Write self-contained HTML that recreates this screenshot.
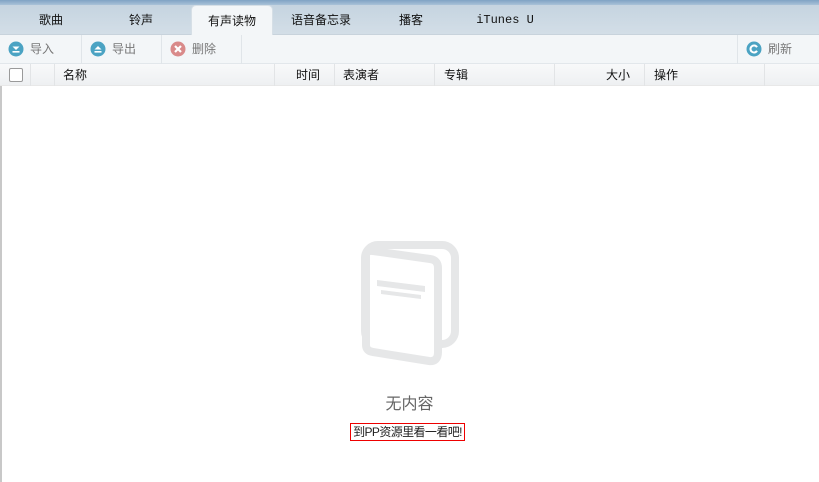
<!DOCTYPE html>
<html><head><meta charset="utf-8"><style>
*{margin:0;padding:0;box-sizing:border-box}
body{width:819px;height:482px;overflow:hidden;background:#fff;font-family:"Liberation Sans","Noto Sans CJK SC",sans-serif;font-size:12px;color:#222;position:relative}
.top{position:absolute;left:0;top:0;width:819px;height:5px;background:linear-gradient(#7fa3c4,#a9c2d8)}
.tabs{position:absolute;left:0;top:5px;width:819px;height:30px;background:linear-gradient(#c5d4e0,#d3dee7);border-bottom:1px solid #c8d3dc}
.tab{position:absolute;top:0;height:30px;line-height:30px;text-align:center;font-size:12px;color:#111}
.tab.act{background:#f3f6f8;border-radius:5px 5px 0 0;top:0;height:31px;border:1px solid #d6dfe6;border-bottom:none}
.tb{position:absolute;left:0;top:35px;width:819px;height:29px;background:#f3f6f8;border-bottom:1px solid #e2e7eb}
.btn{position:absolute;top:0;height:29px;line-height:29px;color:#777;font-size:12px;border-right:1px solid #e0e5e9}
.btn svg{position:absolute;left:8px;top:6px}
.btn span{position:absolute;left:30px}
.hd{position:absolute;left:0;top:64px;width:819px;height:22px;background:linear-gradient(#f8f9fa,#eef0f2);border-bottom:1px solid #e8e8e8}
.c{position:absolute;top:0;height:22px;line-height:22px;border-right:1px solid #e2e4e6;font-size:12px;color:#111}
.cb{position:absolute;left:9px;top:4px;width:14px;height:14px;border:1px solid #9a9a9a;border-radius:2px;background:#fff}
.lb{position:absolute;left:0;top:86px;width:2px;height:396px;background:#c8c8c8}
</style></head><body>
<div class="top"></div>
<div class="tabs">
<div class="tab" style="left:20px;width:62px">歌曲</div>
<div class="tab" style="left:110px;width:62px">铃声</div>
<div class="tab act" style="left:191px;width:82px">有声读物</div>
<div class="tab" style="left:285px;width:72px">语音备忘录</div>
<div class="tab" style="left:380px;width:62px">播客</div>
<div class="tab" style="left:470px;width:70px;font-family:'Liberation Mono',monospace;font-size:12px">iTunes U</div>
</div>
<div class="tb">
<div class="btn" style="left:0;width:82px"><svg width="16" height="16"><circle cx="8" cy="8" r="7.5" fill="#4ba3c3"/><path d="M4.5 5.5h7l-3.5 3.5z" fill="#fff"/><rect x="4.5" y="10" width="7" height="1.6" fill="#fff"/></svg><span>导入</span></div>
<div class="btn" style="left:82px;width:80px"><svg width="16" height="16"><circle cx="8" cy="8" r="7.5" fill="#4ba3c3"/><path d="M4.5 8.5h7L8 5z" fill="#fff"/><rect x="4.5" y="10" width="7" height="1.6" fill="#fff"/></svg><span>导出</span></div>
<div class="btn" style="left:162px;width:80px"><svg width="16" height="16"><circle cx="8" cy="8" r="7.5" fill="#d98a8a"/><path d="M5 5l6 6M11 5l-6 6" stroke="#fff" stroke-width="2.2"/></svg><span>删除</span></div>
<div class="btn" style="left:737px;width:82px;border-right:none;border-left:1px solid #e0e5e9"><svg width="16" height="16"><circle cx="8" cy="8" r="7.5" fill="#4ba3c3"/><path d="M11 6.2A3.5 3.5 0 1 0 11 9.8" stroke="#fff" stroke-width="2" fill="none"/></svg><span>刷新</span></div>
</div>
<div class="hd">
<div class="c" style="left:0;width:31px"><div class="cb"></div></div>
<div class="c" style="left:31px;width:24px"></div>
<div class="c" style="left:55px;width:220px;padding-left:8px">名称</div>
<div class="c" style="left:275px;width:60px;text-align:right;padding-right:14px">时间</div>
<div class="c" style="left:335px;width:100px;padding-left:8px">表演者</div>
<div class="c" style="left:435px;width:120px;padding-left:9px">专辑</div>
<div class="c" style="left:555px;width:90px;text-align:right;padding-right:14px">大小</div>
<div class="c" style="left:645px;width:120px;padding-left:9px">操作</div>
</div>
<div class="lb"></div>
<svg style="position:absolute;left:0;top:0" width="819" height="482">
<rect x="365" y="245" width="90" height="99" rx="13" fill="none" stroke="#e6e7e8" stroke-width="8"/>
<path d="M366 256Q366 250 373 251L430 259Q438 260 438 268V352Q438 362 429 361L373 352Q366 351 366 345Z" fill="#fff" stroke="#e6e7e8" stroke-width="8" stroke-linejoin="round"/>
<path d="M377 280L425 286V292L377 286Z" fill="#e6e7e8"/>
<path d="M381 290L421 295V299L381 294Z" fill="#e6e7e8"/>
</svg>
<div style="position:absolute;left:0;width:819px;top:390px;text-align:center;font-size:16px;color:#666">无内容</div>
<div style="position:absolute;left:350px;top:423px;width:115px;height:18px;border:1px solid #e00;font-size:12px;line-height:16px;text-align:center;color:#222;white-space:nowrap;letter-spacing:-0.6px">到PP资源里看一看吧!</div>
</body></html>
